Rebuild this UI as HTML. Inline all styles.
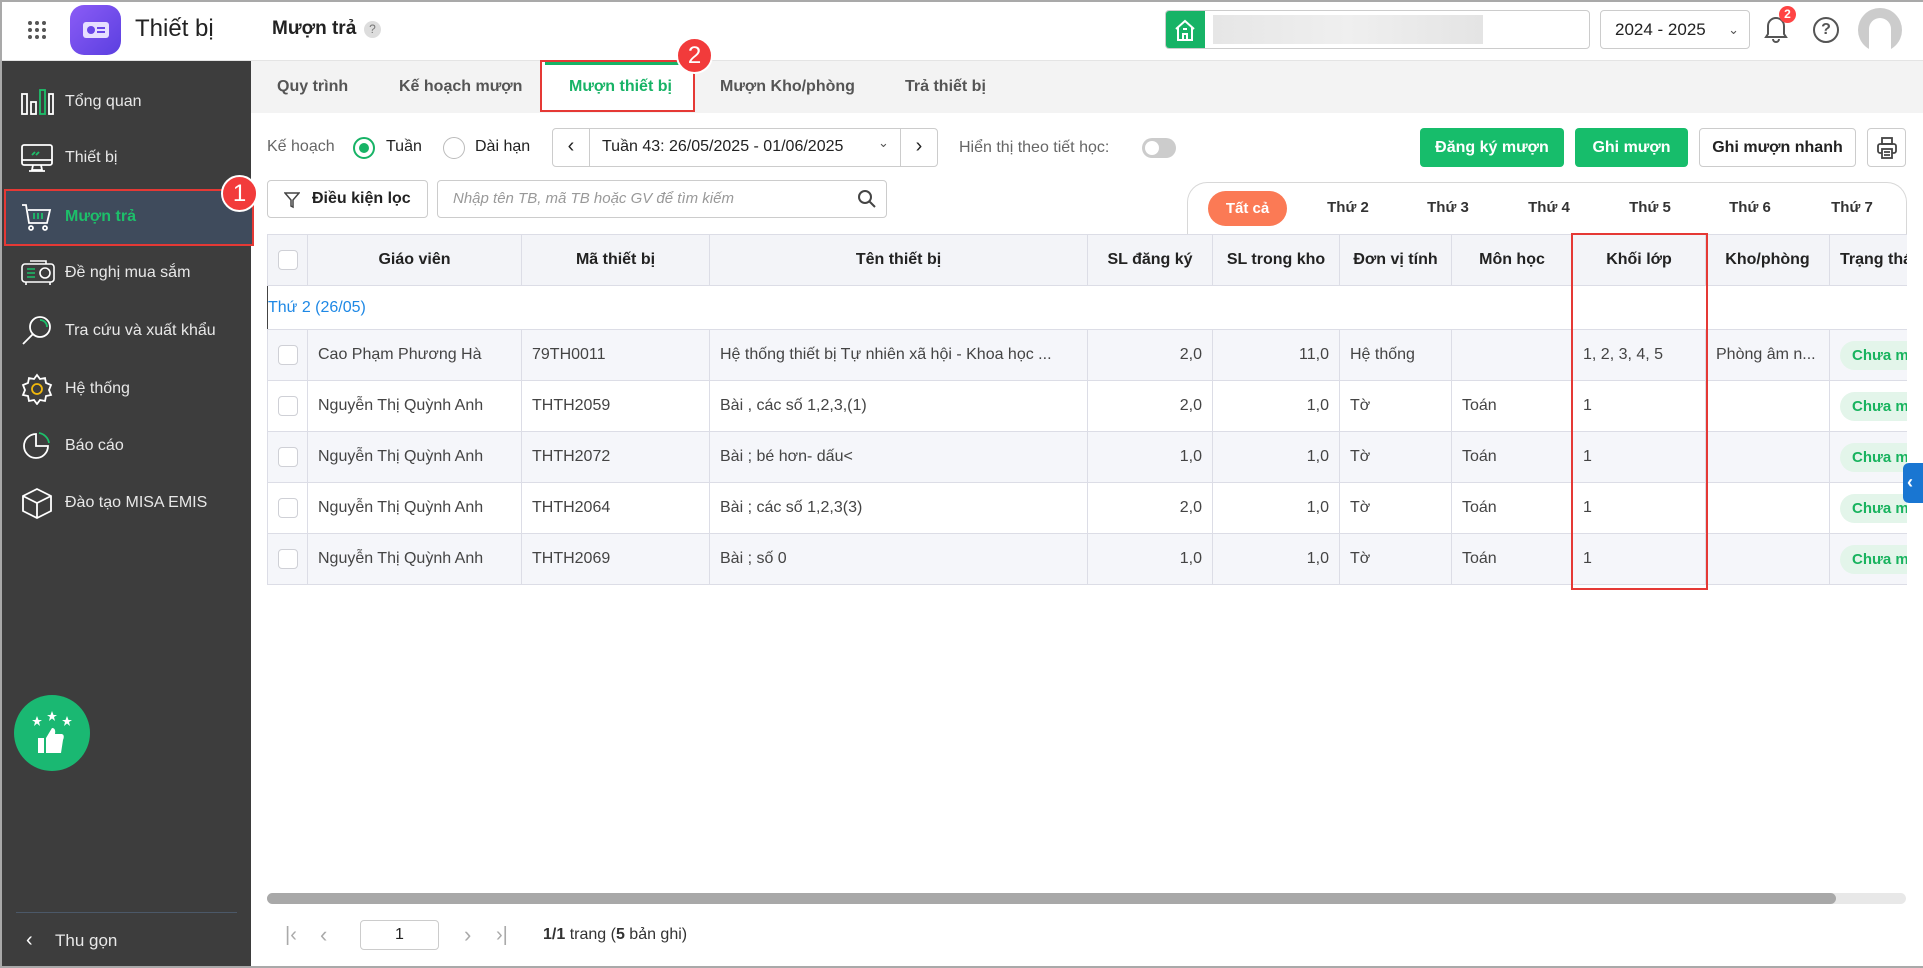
<!DOCTYPE html>
<html><head><meta charset="utf-8">
<style>
*{box-sizing:border-box;margin:0;padding:0}
body{width:1923px;height:968px;overflow:hidden;font-family:"Liberation Sans",sans-serif;background:#fff;position:relative;color:#222;font-size:15px}
.abs{position:absolute}
.frame{position:absolute;left:0;top:0;width:1923px;height:968px;border:2px solid #a9a9a9;border-right:none;pointer-events:none;z-index:50}
.side{left:0;top:61px;width:251px;height:907px;background:#3d3d3d}
.mi{position:absolute;left:0;width:251px;height:48px;display:flex;align-items:center;color:#e8e8e8;font-size:16px}
.mi svg{position:absolute;left:20px}
.mi span{position:absolute;left:65px}
.tab{position:absolute;top:61px;height:52px;line-height:52px;font-size:16px;color:#555;font-weight:bold}
.btn{position:absolute;top:128px;height:39px;border-radius:4px;font-size:16px;font-weight:bold;display:flex;align-items:center;justify-content:center}
.day{position:absolute;top:199px;font-size:15px;font-weight:bold;color:#333;transform:translateX(-50%)}
table{border-collapse:collapse;table-layout:fixed;position:absolute;left:267px;top:234px;width:1705px}
td,th{border:1px solid #dcdde6;height:51px;padding:0 10px;font-size:16px;white-space:nowrap;overflow:hidden;text-overflow:ellipsis;color:#444}
th{background:#f3f4f8;color:#222;font-weight:bold;height:51px}
tr.g td{background:#f5f6fa}
td.c,th.c{padding:0;text-align:center;text-overflow:clip}
.cb{display:inline-block;width:20px;height:20px;border:1px solid #cfd0d6;border-radius:4px;background:#fff;vertical-align:middle}
.r{text-align:right}
.chip{display:inline-block;background:#e3f5ea;color:#18b35e;border-radius:16px;padding:6px 12px;font-weight:bold;font-size:15px}
</style></head><body>
<div class="frame"></div>
<div class="abs" style="left:0;top:0;width:1923px;height:61px;background:#fff;border-bottom:1px solid #e4e4e4"></div>
<svg class="abs" style="left:27px;top:20px" width="20" height="20"><g fill="#555"><circle cx="3" cy="3" r="2"/><circle cx="10" cy="3" r="2"/><circle cx="17" cy="3" r="2"/><circle cx="3" cy="10" r="2"/><circle cx="10" cy="10" r="2"/><circle cx="17" cy="10" r="2"/><circle cx="3" cy="17" r="2"/><circle cx="10" cy="17" r="2"/><circle cx="17" cy="17" r="2"/></g></svg>
<div class="abs" style="left:70px;top:5px;width:51px;height:50px;border-radius:14px;background:linear-gradient(135deg,#8b5cf6,#5b3fe0)"></div>
<svg class="abs" style="left:82px;top:19px" width="28" height="22"><rect x="1" y="3" width="26" height="16" rx="3" fill="#e7e0ff"/><circle cx="9" cy="11" r="4" fill="#6a47e8"/><rect x="15" y="8" width="8" height="2" fill="#6a47e8"/><rect x="15" y="12" width="8" height="2" fill="#6a47e8"/></svg>
<div class="abs" style="left:135px;top:15px;font-size:24px;color:#222">Thiết bị</div>
<div class="abs" style="left:272px;top:18px;font-size:19px;font-weight:bold;color:#222">Mượn trả</div>
<div class="abs" style="left:364px;top:21px;width:17px;height:17px;border-radius:50%;background:#ddd;color:#777;font-size:12px;text-align:center;line-height:17px">?</div>
<div class="abs" style="left:1165px;top:10px;width:425px;height:39px;border:1px solid #ccc;border-radius:4px;overflow:hidden"><div style="position:absolute;left:0;top:0;width:39px;height:39px;background:#17b366"></div>
<svg class="abs" style="left:8px;top:7px" width="22" height="24"><path d="M2 11 L11 3 L20 11 M4 9 V22 H18 V9 M9 22 V16 H13 V22 M9 11 H13" stroke="#fff" stroke-width="2" fill="none"/></svg>
<div style="position:absolute;left:47px;top:4px;width:270px;height:29px;background:linear-gradient(90deg,#e6e6e6,#efefef,#e4e4e4)"></div></div>
<div class="abs" style="left:1600px;top:10px;width:150px;height:39px;border:1px solid #ccc;border-radius:4px;font-size:17px;line-height:37px;padding-left:14px;color:#222">2024 - 2025 <span style="position:absolute;right:10px;color:#555;font-size:13px">&#8964;</span></div>
<svg class="abs" style="left:1762px;top:14px" width="28" height="30"><path d="M6 20 V12 a8 8 0 0 1 16 0 V20 L24 23 H4 Z M11 25 a3 3 0 0 0 6 0" stroke="#555" stroke-width="2" fill="none"/></svg>
<div class="abs" style="left:1779px;top:6px;width:17px;height:17px;border-radius:50%;background:#f44;color:#fff;font-size:12px;text-align:center;line-height:17px;font-weight:bold">2</div>
<div class="abs" style="left:1813px;top:17px;width:26px;height:26px;border:2px solid #555;border-radius:50%;text-align:center;line-height:22px;font-weight:bold;color:#555;font-size:16px">?</div>
<div class="abs" style="left:1858px;top:8px;width:44px;height:44px;border-radius:50%;background:#ccc"></div>
<div class="abs" style="left:1869px;top:18px;width:22px;height:34px;border-radius:11px 11px 0 0;background:#fff"></div>
<div class="abs side"></div>
<div class="abs" style="left:4px;top:189px;width:250px;height:57px;background:#3f4b5c;border:2px solid #e53935"></div>
<div class="mi" style="top:78px"><svg width="34" height="28"><g stroke="#fff" stroke-width="1.8" fill="none"><rect x="2" y="6" width="5" height="20"/><rect x="11" y="14" width="5" height="12"/><rect x="20" y="2" width="5" height="24" stroke="#1dbf6a"/><rect x="29" y="6" width="4" height="20"/></g></svg><span>Tổng quan</span></div>
<div class="mi" style="top:134px"><svg width="34" height="30"><g stroke="#fff" stroke-width="1.8" fill="none"><rect x="2" y="2" width="30" height="20" rx="2"/><path d="M2 17 H32 M13 22 L12 27 H22 L21 22 M9 28 H25"/><path d="M12 12 L15 9 M16 12 L19 9" stroke="#1dbf6a"/></g></svg><span>Thiết bị</span></div>
<div class="mi" style="top:193px;color:#1dbf6a;font-weight:bold"><svg width="34" height="30"><g stroke="#fff" stroke-width="1.8" fill="none"><path d="M2 3 H6 L9 21 H27 L30 8 H8"/><circle cx="11" cy="26" r="2"/><circle cx="25" cy="26" r="2"/><path d="M14 11 V17 M18 11 V17 M22 11 V17" stroke="#1dbf6a"/></g></svg><span>Mượn trả</span></div>
<div class="mi" style="top:249px"><svg width="36" height="28"><g stroke="#fff" stroke-width="1.6" fill="none"><rect x="2" y="5" width="32" height="18" rx="3"/><path d="M10 2 H26 V5 M6 23 V26 M30 23 V26"/><circle cx="25" cy="14" r="5"/><path d="M7 10 H15 M7 14 H15 M7 18 H15" stroke="#1dbf6a"/></g></svg><span>Đề nghị mua sắm</span></div>
<div class="mi" style="top:307px"><svg width="34" height="32"><g stroke="#fff" stroke-width="1.8" fill="none"><circle cx="20" cy="12" r="10"/><path d="M13 19 L3 29"/><path d="M20 5 A7 7 0 0 1 27 12" stroke="#1dbf6a"/></g></svg><span>Tra cứu và xuất khẩu</span></div>
<div class="mi" style="top:365px"><svg width="34" height="32"><g stroke="#fff" stroke-width="1.8" fill="none"><path d="M17 2 L20 6 L25 5 L26 10 L31 12 L29 17 L31 22 L26 23 L25 28 L20 27 L17 31 L14 27 L9 28 L8 23 L3 22 L5 17 L3 12 L8 10 L9 5 L14 6 Z"/><circle cx="17" cy="16" r="5" stroke="#f2b90c"/></g></svg><span>Hệ thống</span></div>
<div class="mi" style="top:422px"><svg width="34" height="32"><g stroke="#fff" stroke-width="1.8" fill="none"><path d="M16 4 A12 12 0 1 0 28 16 H16 Z"/><path d="M19 3 A12 12 0 0 1 29 13" stroke="#1dbf6a"/></g></svg><span>Báo cáo</span></div>
<div class="mi" style="top:479px"><svg width="34" height="32"><g stroke="#fff" stroke-width="1.8" fill="none"><path d="M17 2 L31 9 V24 L17 31 L3 24 V9 Z M3 9 L17 16 L31 9 M17 16 V31"/></g></svg><span>Đào tạo MISA EMIS</span></div>
<div class="abs" style="left:14px;top:695px;width:76px;height:76px;border-radius:50%;background:#1ab872"></div>
<svg class="abs" style="left:30px;top:710px" width="44" height="48"><g fill="#fff"><polygon points="7,6 8.5,10 12,10 9,12 10,16 7,13.5 4,16 5,12 2,10 5.5,10"/><polygon points="22,1 23.5,5 27,5 24,7 25,11 22,8.5 19,11 20,7 17,5 20.5,5"/><polygon points="37,6 38.5,10 42,10 39,12 40,16 37,13.5 34,16 35,12 32,10 35.5,10"/><rect x="8" y="28" width="6" height="15"/><path d="M16 28 L22 18 Q26 18 25 24 H32 Q35 25 33 30 L31 43 H16 Z"/></g></svg>
<div class="abs" style="left:16px;top:912px;width:221px;height:1px;background:#4b5868"></div>
<div class="abs" style="left:26px;top:929px;color:#fff;font-size:20px">&#8249;</div>
<div class="abs" style="left:55px;top:931px;color:#e8e8e8;font-size:17px">Thu gọn</div>
<div class="abs" style="left:251px;top:61px;width:1672px;height:52px;background:#f3f3f3"></div>
<div class="tab" style="left:277px">Quy trình</div>
<div class="tab" style="left:399px">Kế hoạch mượn</div>
<div class="abs" style="left:540px;top:60px;width:155px;height:52px;background:#fff;border:2px solid #e53935"></div>
<div class="abs" style="left:545px;top:62px;width:145px;height:3px;background:#17b366"></div>
<div class="tab" style="left:569px;color:#17b366">Mượn thiết bị</div>
<div class="tab" style="left:720px">Mượn Kho/phòng</div>
<div class="tab" style="left:905px">Trả thiết bị</div>
<div class="abs" style="left:676px;top:37px;width:37px;height:37px;border-radius:50%;background:#f23b3b;border:2px solid #fff;color:#fff;font-size:24px;text-align:center;line-height:33px">2</div>
<div class="abs" style="left:221px;top:175px;width:37px;height:37px;border-radius:50%;background:#f23b3b;border:2px solid #fff;color:#fff;font-size:24px;text-align:center;line-height:33px">1</div>
<div class="abs" style="left:267px;top:138px;color:#666;font-size:16px">Kế hoạch</div>
<div class="abs" style="left:353px;top:137px;width:22px;height:22px;border-radius:50%;border:2px solid #17b366"><div style="margin:4px;width:10px;height:10px;border-radius:50%;background:#17b366"></div></div>
<div class="abs" style="left:386px;top:138px;font-size:16px">Tuần</div>
<div class="abs" style="left:443px;top:137px;width:22px;height:22px;border-radius:50%;border:1px solid #bbb"></div>
<div class="abs" style="left:475px;top:138px;font-size:16px">Dài hạn</div>
<div class="abs" style="left:552px;top:128px;width:386px;height:39px;border:1px solid #ccc;border-radius:4px;overflow:hidden">
<div style="position:absolute;left:0;top:0;width:37px;height:37px;border-right:1px solid #ccc;text-align:center;line-height:35px;font-size:20px">&#8249;</div>
<div style="position:absolute;left:49px;top:9px;font-size:16px;white-space:nowrap;width:274px;overflow:hidden">Tuần 43: 26/05/2025 - 01/06/2025</div>
<div style="position:absolute;left:325px;top:6px;font-size:13px;color:#555">&#8964;</div>
<div style="position:absolute;right:0;top:0;width:37px;height:37px;border-left:1px solid #ccc;text-align:center;line-height:35px;font-size:20px">&#8250;</div></div>
<div class="abs" style="left:959px;top:139px;color:#666;font-size:16px">Hiển thị theo tiết học:</div>
<div class="abs" style="left:1142px;top:138px;width:34px;height:20px;border-radius:10px;background:#ccc"><div style="margin:3px;width:14px;height:14px;border-radius:50%;background:#fff"></div></div>
<div class="btn" style="left:1420px;width:144px;background:#17bd6b;color:#fff">Đăng ký mượn</div>
<div class="btn" style="left:1575px;width:113px;background:#17bd6b;color:#fff">Ghi mượn</div>
<div class="btn" style="left:1699px;width:157px;border:1px solid #ccc;color:#222">Ghi mượn nhanh</div>
<div class="btn" style="left:1867px;width:39px;border:1px solid #ccc"><svg width="22" height="24"><g stroke="#444" stroke-width="1.8" fill="none"><rect x="6" y="2" width="10" height="6"/><rect x="2" y="8" width="18" height="9" rx="2"/><rect x="6" y="13" width="10" height="9" fill="#fff"/><path d="M8 16 H14 M8 19 H14"/></g></svg></div>
<div class="abs" style="left:267px;top:180px;width:161px;height:38px;border:1px solid #ccc;border-radius:4px;font-weight:bold;font-size:16px;line-height:36px;padding-left:44px">Điều kiện lọc</div>
<svg class="abs" style="left:284px;top:191px" width="16" height="18"><path d="M1 2 H15 L9 9 V16 L7 15 V9 Z" stroke="#444" stroke-width="1.5" fill="none"/></svg>
<div class="abs" style="left:437px;top:180px;width:450px;height:38px;border:1px solid #ccc;border-radius:4px;font-style:italic;color:#999;font-size:15px;line-height:36px;padding-left:15px">Nhập tên TB, mã TB hoặc GV để tìm kiếm</div>
<svg class="abs" style="left:857px;top:189px" width="20" height="20"><circle cx="8" cy="8" r="6" stroke="#444" stroke-width="2" fill="none"/><path d="M12.5 12.5 L18 18" stroke="#444" stroke-width="2"/></svg>
<div class="abs" style="left:1187px;top:182px;width:720px;height:60px;border:1px solid #d8d8d8;border-bottom:none;border-radius:20px 20px 0 0;background:#fff"></div>
<div class="abs" style="left:1208px;top:191px;width:79px;height:35px;border-radius:18px;background:#fb7a55;color:#fff;font-weight:bold;text-align:center;line-height:35px;font-size:15px">Tất cả</div>
<div class="day" style="left:1348px">Thứ 2</div><div class="day" style="left:1448px">Thứ 3</div><div class="day" style="left:1549px">Thứ 4</div><div class="day" style="left:1650px">Thứ 5</div><div class="day" style="left:1750px">Thứ 6</div><div class="day" style="left:1852px">Thứ 7</div>
<div class="abs" style="left:267px;top:234px;width:1640px;height:360px;overflow:hidden">
<table style="left:0;top:0">
<colgroup><col style="width:40px"><col style="width:214px"><col style="width:188px"><col style="width:378px"><col style="width:125px"><col style="width:127px"><col style="width:112px"><col style="width:121px"><col style="width:133px"><col style="width:124px"><col style="width:143px"></colgroup>
<tr><th class="c"><span class="cb"></span></th><th>Giáo viên</th><th>Mã thiết bị</th><th>Tên thiết bị</th><th>SL đăng ký</th><th>SL trong kho</th><th>Đơn vị tính</th><th>Môn học</th><th>Khối lớp</th><th>Kho/phòng</th><th style="text-align:left">Trạng thái</th></tr>
<tr><td colspan="11" style="color:#1e88e5;padding-left:0;border-left:1px solid #444;border-right:none;height:44px">Thứ 2 (26/05)</td></tr>
<tr class="g"><td class="c"><span class="cb"></span></td><td>Cao Phạm Phương Hà</td><td>79TH0011</td><td>Hệ thống thiết bị Tự nhiên xã hội - Khoa học ...</td><td class="r">2,0</td><td class="r">11,0</td><td>Hệ thống</td><td></td><td>1, 2, 3, 4, 5</td><td>Phòng âm n...</td><td><span class="chip">Chưa mượn</span></td></tr>
<tr><td class="c"><span class="cb"></span></td><td>Nguyễn Thị Quỳnh Anh</td><td>THTH2059</td><td>Bài , các số 1,2,3,(1)</td><td class="r">2,0</td><td class="r">1,0</td><td>Tờ</td><td>Toán</td><td>1</td><td></td><td><span class="chip">Chưa mượn</span></td></tr>
<tr class="g"><td class="c"><span class="cb"></span></td><td>Nguyễn Thị Quỳnh Anh</td><td>THTH2072</td><td>Bài ; bé hơn- dấu&lt;</td><td class="r">1,0</td><td class="r">1,0</td><td>Tờ</td><td>Toán</td><td>1</td><td></td><td><span class="chip">Chưa mượn</span></td></tr>
<tr><td class="c"><span class="cb"></span></td><td>Nguyễn Thị Quỳnh Anh</td><td>THTH2064</td><td>Bài ; các số 1,2,3(3)</td><td class="r">2,0</td><td class="r">1,0</td><td>Tờ</td><td>Toán</td><td>1</td><td></td><td><span class="chip">Chưa mượn</span></td></tr>
<tr class="g"><td class="c"><span class="cb"></span></td><td>Nguyễn Thị Quỳnh Anh</td><td>THTH2069</td><td>Bài ; số 0</td><td class="r">1,0</td><td class="r">1,0</td><td>Tờ</td><td>Toán</td><td>1</td><td></td><td><span class="chip">Chưa mượn</span></td></tr>
</table></div>
<div class="abs" style="left:1571px;top:233px;width:137px;height:357px;border:2px solid #e53935"></div>
<div class="abs" style="left:1903px;top:463px;width:20px;height:40px;background:#1976d2;border-radius:6px 0 0 6px;color:#fff;font-size:18px;line-height:38px;padding-left:4px;font-weight:bold">&#8249;</div>
<div class="abs" style="left:267px;top:893px;width:1639px;height:11px;border-radius:6px;background:#e8e8e8"></div>
<div class="abs" style="left:267px;top:893px;width:1569px;height:11px;border-radius:6px;background:#a8a8a8"></div>
<div class="abs" style="left:285px;top:924px;color:#aaa;font-size:20px">|&#8249;</div>
<div class="abs" style="left:320px;top:922px;color:#aaa;font-size:22px">&#8249;</div>
<div class="abs" style="left:360px;top:920px;width:79px;height:30px;border:1px solid #ccc;border-radius:4px;text-align:center;line-height:28px;font-size:16px">1</div>
<div class="abs" style="left:464px;top:922px;color:#aaa;font-size:22px">&#8250;</div>
<div class="abs" style="left:496px;top:924px;color:#aaa;font-size:20px">&#8250;|</div>
<div class="abs" style="left:543px;top:926px;font-size:16px;color:#333"><b>1/1</b> trang (<b>5</b> bản ghi)</div>
</body></html>
